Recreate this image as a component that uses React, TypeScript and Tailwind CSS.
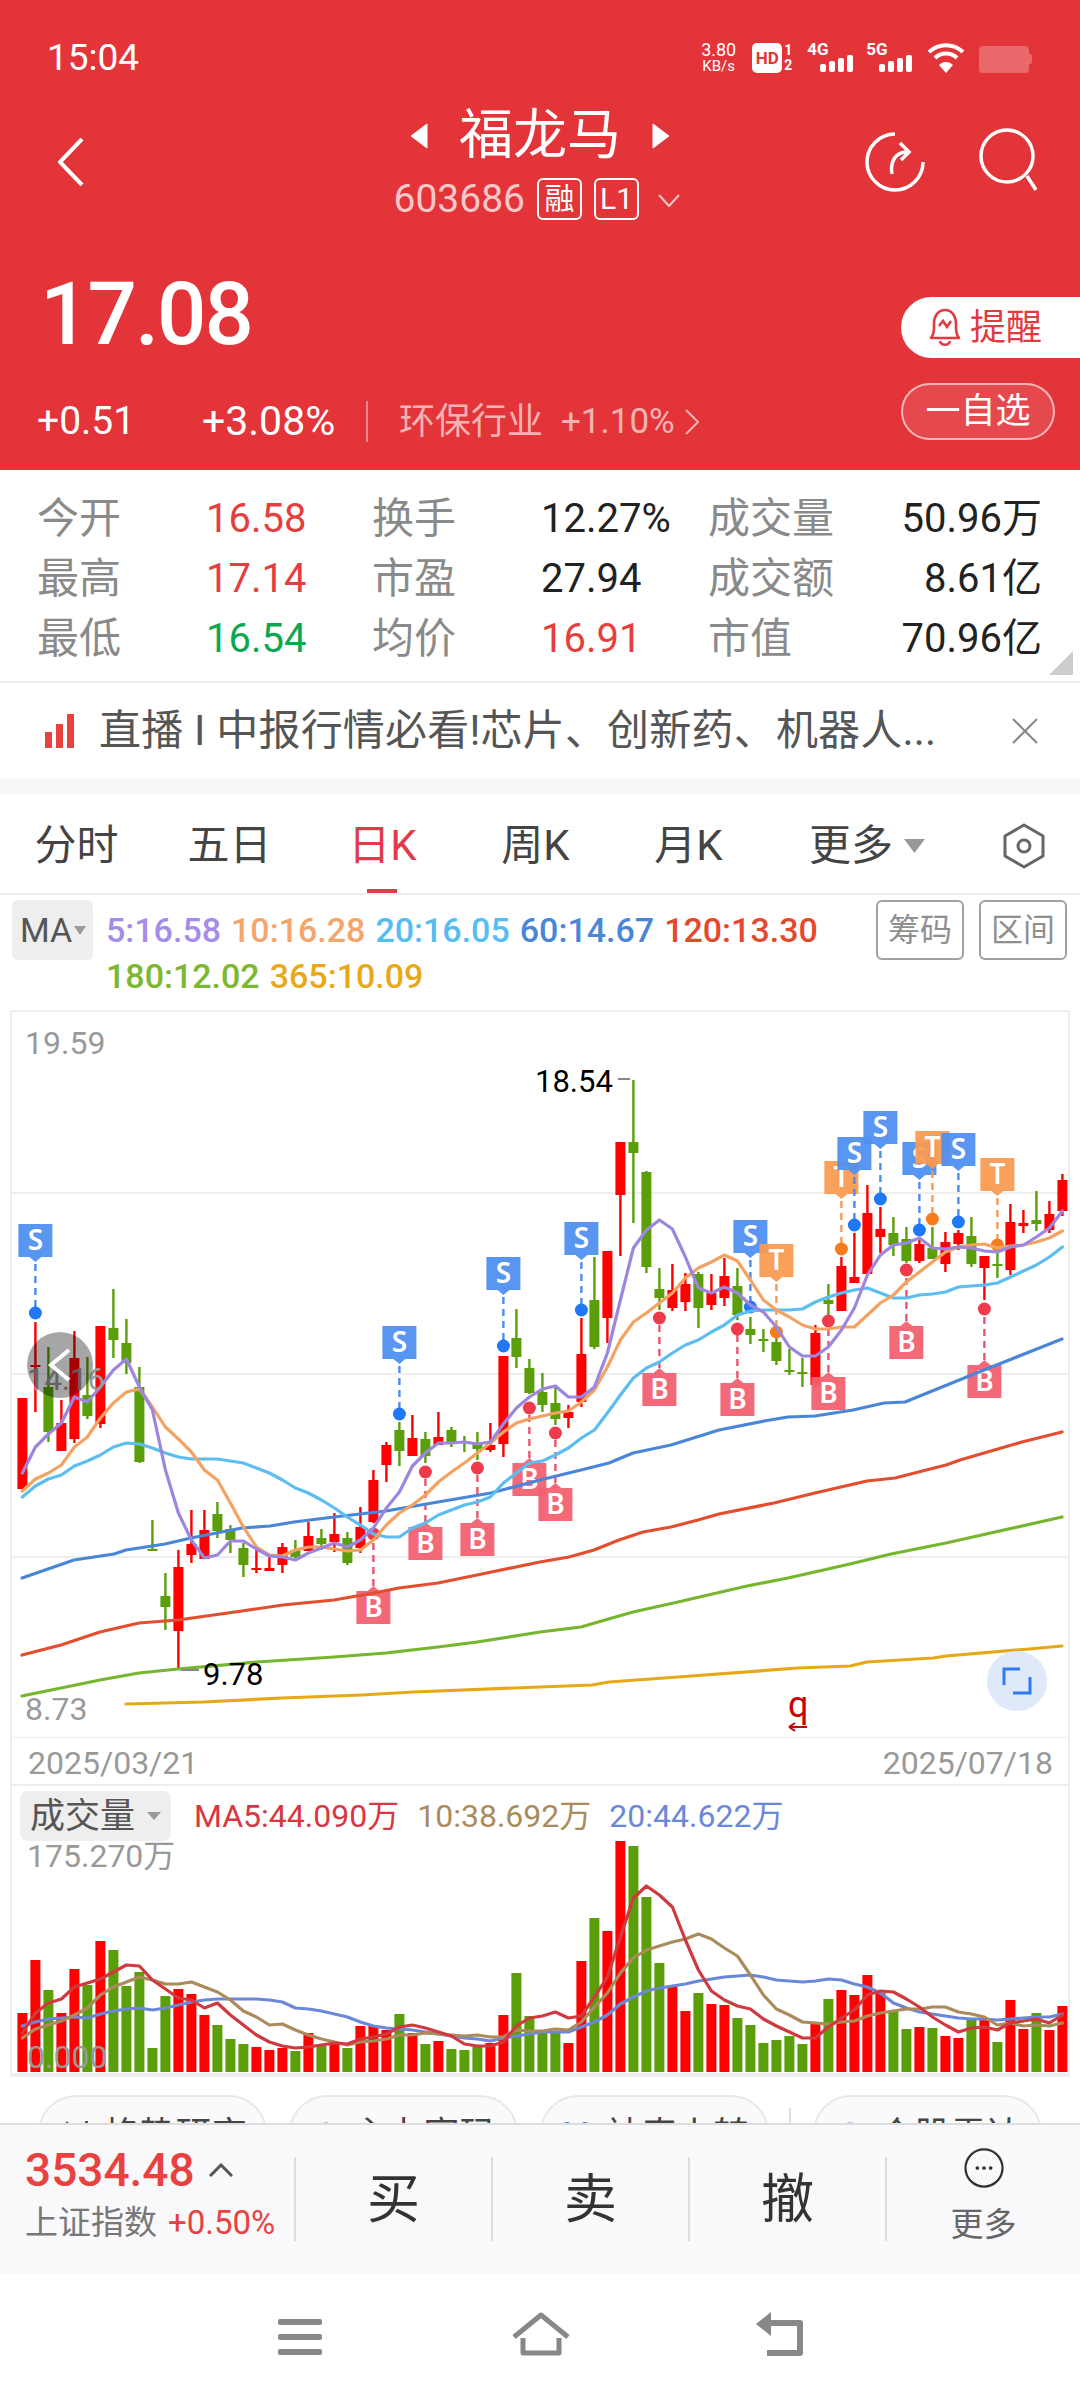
import React from 'react';

const RED = '#ff0000';
const GREEN = '#5a9e0a';

// [up, wickTop, bodyTop, bodyBottom, wickBottom]
const candles: [number, number, number, number, number][] = [
  [1, 1398, 1398, 1489, 1489], [1, 1322, 1365, 1366, 1412], [0, 1347, 1387, 1432, 1442], [1, 1400, 1423, 1451, 1451],
  [1, 1331, 1358, 1439, 1443], [0, 1357, 1395, 1416, 1419], [1, 1326, 1326, 1424, 1428], [0, 1289, 1328, 1340, 1358],
  [0, 1319, 1343, 1363, 1374], [0, 1367, 1387, 1462, 1463], [0, 1520, 1549, 1551, 1551], [0, 1573, 1596, 1607, 1630],
  [1, 1550, 1567, 1631, 1668], [1, 1510, 1544, 1555, 1563], [1, 1510, 1530, 1559, 1559], [0, 1502, 1514, 1531, 1538],
  [0, 1525, 1529, 1540, 1553], [0, 1543, 1548, 1565, 1577], [1, 1548, 1568, 1569, 1573], [1, 1557, 1568, 1571, 1571],
  [1, 1543, 1547, 1565, 1573], [0, 1540, 1550, 1557, 1558], [1, 1522, 1536, 1551, 1551], [0, 1529, 1538, 1544, 1550],
  [1, 1513, 1534, 1542, 1552], [0, 1532, 1538, 1563, 1565], [1, 1507, 1527, 1548, 1553], [1, 1470, 1480, 1522, 1523],
  [1, 1442, 1445, 1465, 1482], [0, 1422, 1430, 1451, 1466], [1, 1415, 1438, 1456, 1456], [0, 1432, 1439, 1456, 1463],
  [1, 1412, 1437, 1445, 1445], [0, 1427, 1430, 1442, 1447], [0, 1436, 1441, 1442, 1452], [0, 1432, 1443, 1449, 1460],
  [1, 1423, 1445, 1450, 1452], [1, 1356, 1356, 1444, 1457], [0, 1309, 1338, 1357, 1368], [0, 1359, 1368, 1393, 1394],
  [0, 1373, 1392, 1405, 1412], [0, 1387, 1403, 1419, 1425], [1, 1405, 1412, 1418, 1428], [1, 1318, 1354, 1402, 1407],
  [0, 1257, 1300, 1347, 1349], [1, 1251, 1251, 1318, 1343], [1, 1142, 1142, 1195, 1256], [0, 1080, 1142, 1153, 1223],
  [0, 1171, 1172, 1267, 1273], [0, 1268, 1289, 1298, 1310], [1, 1264, 1290, 1308, 1311], [1, 1273, 1284, 1302, 1311],
  [0, 1272, 1274, 1308, 1328], [1, 1274, 1293, 1305, 1310], [1, 1258, 1276, 1298, 1306], [0, 1268, 1286, 1315, 1320],
  [0, 1317, 1329, 1335, 1344], [0, 1329, 1339, 1341, 1352], [0, 1335, 1342, 1361, 1365], [0, 1349, 1370, 1372, 1375],
  [0, 1358, 1372, 1373, 1387], [1, 1325, 1333, 1385, 1387], [0, 1284, 1300, 1304, 1318], [1, 1257, 1266, 1311, 1311],
  [1, 1233, 1277, 1283, 1283], [1, 1185, 1213, 1274, 1274], [1, 1207, 1229, 1237, 1253], [0, 1217, 1233, 1245, 1256],
  [0, 1227, 1239, 1261, 1263], [1, 1240, 1244, 1261, 1263], [0, 1227, 1248, 1259, 1259], [1, 1232, 1242, 1264, 1272],
  [1, 1230, 1233, 1244, 1250], [0, 1217, 1236, 1264, 1267], [1, 1256, 1256, 1268, 1300], [0, 1252, 1264, 1265, 1278],
  [1, 1204, 1222, 1270, 1275], [1, 1210, 1223, 1226, 1233], [0, 1191, 1220, 1224, 1231], [1, 1201, 1214, 1230, 1233],
  [1, 1174, 1180, 1211, 1216],
];

const ma5 = [
  1473, 1447, 1434, 1423, 1397, 1402, 1387, 1370, 1359, 1387, 1410, 1470, 1513, 1540, 1558, 1555, 1541, 1541, 1549, 1556,
  1557, 1560, 1553, 1548, 1543, 1547, 1540, 1528, 1508, 1492, 1466, 1453, 1443, 1443, 1442, 1444, 1442, 1424, 1408, 1397,
  1389, 1386, 1397, 1397, 1387, 1353, 1300, 1248, 1230, 1220, 1229, 1257, 1288, 1293, 1287, 1293, 1305, 1312, 1327, 1347,
  1356, 1356, 1347, 1330, 1308, 1275, 1255, 1245, 1243, 1238, 1248, 1249, 1247, 1248, 1251, 1252, 1247, 1245, 1237, 1228, 1211,
];
const ma10 = [
  1491, 1479, 1473, 1465, 1447, 1437, 1418, 1403, 1392, 1389, 1407, 1427, 1439, 1452, 1470, 1480, 1503, 1527, 1547, 1555,
  1556, 1550, 1547, 1547, 1549, 1551, 1550, 1540, 1525, 1513, 1505, 1495, 1482, 1472, 1463, 1453, 1443, 1432, 1423, 1419,
  1416, 1413, 1411, 1402, 1390, 1367, 1340, 1322, 1313, 1303, 1293, 1278, 1268, 1262, 1255, 1261, 1280, 1300, 1310, 1317,
  1325, 1329, 1329, 1327, 1327, 1315, 1303, 1295, 1282, 1272, 1262, 1252, 1247, 1245, 1244, 1248, 1246, 1245, 1242, 1238, 1231,
];
const ma20 = [
  1497, 1486, 1479, 1475, 1466, 1461, 1455, 1447, 1443, 1444, 1448, 1453, 1457, 1459, 1459, 1459, 1461, 1463, 1468, 1473,
  1480, 1488, 1493, 1500, 1508, 1517, 1525, 1534, 1537, 1537, 1528, 1523, 1515, 1510, 1505, 1502, 1497, 1483, 1473, 1463,
  1461, 1455, 1448, 1438, 1430, 1413, 1395, 1378, 1368, 1362, 1353, 1345, 1340, 1332, 1325, 1315, 1311, 1310, 1310, 1310,
  1309, 1302, 1297, 1293, 1290, 1288, 1293, 1298, 1298, 1295, 1294, 1292, 1287, 1286, 1285, 1283, 1277, 1271, 1265, 1257, 1247,
];
const ma60 = '22,1578 74,1560 114,1554 126,1550 165,1544 191,1538 242,1528 270,1526 294,1522 334,1517 386,1511 438,1502 491,1493 540,1480 581,1470 609,1463 633,1453 671,1445 719,1430 764,1421 788,1417 815,1416 853,1410 884,1403 905,1402 984,1370 1062,1339';
const ma120 = '22,1655 61,1645 100,1632 139,1623 178,1620 242,1611 283,1605 334,1600 374,1593 399,1588 438,1583 477,1575 540,1562 569,1557 594,1550 619,1540 643,1532 671,1527 698,1520 719,1514 774,1503 815,1493 867,1481 895,1478 946,1465 960,1460 1022,1442 1062,1432';
const ma180 = '22,1696 61,1688 100,1680 139,1673 178,1669 257,1662 334,1657 386,1653 438,1647 477,1642 540,1632 581,1627 605,1620 633,1612 678,1602 747,1586 788,1578 850,1564 891,1554 946,1543 1062,1517';
const ma365 = '126,1704 203,1702 282,1698 362,1695 413,1692 540,1687 592,1685 609,1682 678,1677 798,1668 850,1666 867,1662 933,1658 946,1656 1029,1649 1062,1646';

const vols = [
  59, 112, 82, 59, 103, 87, 131, 122, 86, 100, 24, 76, 83, 78, 57, 47, 33, 28, 25, 22, 24, 21, 39, 26, 29, 24, 46, 46, 42, 58,
  39, 28, 31, 23, 22, 25, 29, 57, 99, 56, 39, 39, 29, 111, 154, 141, 231, 226, 175, 109, 86, 61, 79, 68, 67, 54, 47, 29, 32, 36,
  28, 49, 73, 82, 77, 97, 79, 62, 43, 45, 44, 36, 34, 54, 52, 30, 72, 43, 59, 42, 66,
];
const volMa5 = [
  2033, 2013, 2003, 1999, 1987, 1983, 1979, 1972, 1965, 1966, 1980, 1989, 1998, 2000, 2008, 2003, 2015, 2025, 2035, 2042,
  2046, 2048, 2047, 2045, 2043, 2044, 2039, 2037, 2034, 2027, 2025, 2028, 2032, 2036, 2044, 2046, 2046, 2042, 2026, 2018,
  2016, 2012, 2018, 2016, 1997, 1977, 1937, 1898, 1886, 1895, 1907, 1940, 1970, 1991, 2000, 2006, 2009, 2019, 2026, 2032,
  2038, 2038, 2027, 2018, 2010, 1995, 1991, 1992, 1999, 2007, 2017, 2025, 2032, 2028, 2027, 2030, 2023, 2021, 2019, 2023, 2015,
];
const volMa10 = [
  2038, 2029, 2025, 2021, 2015, 2008, 1995, 1987, 1982, 1977, 1980, 1984, 1984, 1982, 1987, 1992, 2000, 2011, 2017, 2025,
  2024, 2030, 2035, 2039, 2042, 2045, 2042, 2041, 2039, 2035, 2035, 2033, 2034, 2035, 2036, 2035, 2037, 2037, 2030, 2031,
  2031, 2029, 2030, 2022, 2007, 1993, 1973, 1958, 1950, 1946, 1942, 1939, 1934, 1939, 1948, 1956, 1975, 1995, 2009, 2015,
  2022, 2023, 2024, 2022, 2021, 2016, 2013, 2011, 2009, 2009, 2007, 2007, 2012, 2014, 2017, 2025, 2023, 2026, 2025, 2026, 2023,
];
const volMa20 = [
  2026, 2022, 2019, 2018, 2017, 2018, 2014, 2011, 2009, 2008, 2010, 2008, 2005, 2002, 2000, 1999, 1999, 1999, 1999, 2000,
  2002, 2008, 2009, 2011, 2014, 2017, 2022, 2026, 2028, 2029, 2030, 2032, 2034, 2036, 2038, 2039, 2041, 2038, 2036, 2034,
  2032, 2032, 2032, 2027, 2022, 2015, 2004, 1997, 1991, 1988, 1986, 1984, 1981, 1979, 1977, 1976, 1975, 1977, 1980, 1981,
  1982, 1981, 1979, 1980, 1984, 1987, 1993, 2003, 2008, 2012, 2014, 2016, 2018, 2019, 2019, 2020, 2019, 2018, 2017, 2017, 2014,
];

// kind, candle index, flag top, dot y
const markers: ['S' | 'T' | 'B', number, number, number][] = [
  ['S', 1, 1224, 1313], ['S', 29, 1326, 1414], ['B', 27, 1591, 1534], ['B', 31, 1527, 1472], ['B', 35, 1523, 1468],
  ['S', 37, 1257, 1346], ['B', 39, 1463, 1408], ['B', 41, 1488, 1433], ['S', 43, 1222, 1310], ['B', 49, 1373, 1318],
  ['B', 55, 1383, 1329], ['S', 56, 1220, 1307], ['T', 58, 1244, 1332], ['B', 62, 1377, 1321], ['T', 63, 1161, 1249],
  ['S', 64, 1137, 1225], ['S', 66, 1111, 1199], ['B', 68, 1326, 1270], ['S', 69, 1142, 1230], ['T', 70, 1131, 1219],
  ['S', 72, 1133, 1222], ['B', 74, 1365, 1309], ['T', 75, 1158, 1245],
];

const markerColors = {
  S: { flag: '#4f8ff0', dot: '#1f78f5', dash: '#4a8cf0' },
  T: { flag: '#f99a50', dot: '#f57d1e', dash: '#f59a55' },
  B: { flag: '#f2606f', dot: '#ee3a4a', dash: '#e8556a' },
};

const xOf = (i: number) => 22.4 + 13 * i;
const pts = (ys: number[]) => ys.map((y, i) => `${xOf(i)},${y}`).join(' ');

function Line({ points, color }: { points: string; color: string }) {
  return <polyline points={points} fill="none" stroke={color} strokeWidth={3.2} strokeLinejoin="round" strokeLinecap="round" />;
}

function Marker({ kind, i, top, dot }: { kind: 'S' | 'T' | 'B'; i: number; top: number; dot: number }) {
  const c = markerColors[kind];
  const x = xOf(i);
  const up = kind === 'B';
  const d = up
    ? `M${x - 17} ${top}H${x - 6}L${x} ${top - 5}L${x + 6} ${top}H${x + 17}V${top + 33}H${x - 17}Z`
    : `M${x - 17} ${top}H${x + 17}V${top + 33}H${x + 6}L${x} ${top + 38}L${x - 6} ${top + 33}H${x - 17}Z`;
  return (
    <g>
      <line x1={x} x2={x} y1={up ? top - 5 : top + 40} y2={dot} stroke={c.dash} strokeWidth={2.4} strokeDasharray="7 5" />
      <circle cx={x} cy={dot} r={6.5} fill={c.dot} />
      <path d={d} fill={c.flag} fillOpacity={0.94} />
      <text x={x} y={top + 26} textAnchor="middle" fontSize={28} fontWeight={600} fill="#fff" fontFamily="Noto Sans, sans-serif">
        {kind}
      </text>
    </g>
  );
}

function Candles() {
  return (
    <>
      {candles.map(([up, wt, bt, bb, wb], i) => {
        const color = up ? RED : GREEN;
        return (
          <g key={i}>
            <rect x={xOf(i) - 1.2} y={wt} width={2.4} height={wb - wt} fill={color} />
            <rect x={xOf(i) - 5} y={bt} width={10} height={Math.max(bb - bt, 2)} fill={color} />
          </g>
        );
      })}
    </>
  );
}

function KChart() {
  return (
    <div className="relative w-[1060px] h-[728px] ml-[10px] border-x-2 border-t-2 border-[#eeeeee] box-border">
      <svg className="absolute left-[-2px] top-[-2px]" width={1060} height={728} viewBox="10 1010 1060 728">
        {[1193, 1374, 1557, 1738].map((y) => (
          <line key={y} x1={10} x2={1070} y1={y} y2={y} stroke="#eeeeee" strokeWidth={2} />
        ))}
        <Candles />
        {markers.map(([kind, i, top, dot]) => (
          <Marker key={`${kind}${i}`} kind={kind} i={i} top={top} dot={dot} />
        ))}
        <Line points={ma365} color="#e6a817" />
        <Line points={ma180} color="#76b52e" />
        <Line points={ma120} color="#e24e2e" />
        <Line points={ma60} color="#4a86d8" />
        <Line points={pts(ma20)} color="#5bbdf0" />
        <Line points={pts(ma10)} color="#f4a261" />
        <Line points={pts(ma5)} color="#9c86e0" />
        <line x1={618} x2={630} y1={1079} y2={1079} stroke="#888" strokeWidth={2} />
        <line x1={181} x2={199} y1={1670} y2={1670} stroke="#888" strokeWidth={2} />
        <path d="M789 1727H807M789 1727l6-4M789 1727l6 4" stroke="#cc0000" strokeWidth={2} fill="none" />
        <circle cx={1017} cy={1681} r={30} fill="#dfe9fa" />
        <path d="M1004 1685V1669H1020M1030 1677V1693H1013" fill="none" stroke="#2f7bf0" strokeWidth={3} />
      </svg>
      <span className="absolute left-[13px] top-[13px] text-[32px] leading-[36px] text-[#999999]">19.59</span>
      <span className="absolute left-[15px] top-[350px] text-[31px] leading-[36px] text-[#999999]">14.16</span>
      <span className="absolute left-[13px] top-[679px] text-[32px] leading-[36px] text-[#999999]">8.73</span>
      <span className="absolute left-[523px] top-[52px] text-[31px] leading-[36px] text-black">18.54</span>
      <span className="absolute left-[191px] top-[645px] text-[31px] leading-[36px] text-black">9.78</span>
      <span className="absolute left-[776px] top-[675px] text-[36px] leading-[36px] text-[#cc0000]">q</span>
      <div className="absolute left-[15px] top-[320px] w-[66px] h-[66px] rounded-full bg-black/35 flex items-center justify-center">
        <svg width="28" height="36" viewBox="0 0 28 36" fill="none">
          <path d="M23 3L5 18L23 33" stroke="#ffffff" strokeWidth={4} />
        </svg>
      </div>
    </div>
  );
}

function VolumeChart() {
  return (
    <div className="relative w-[1060px] h-[291px] ml-[10px] border-x-2 border-[#eeeeee] box-border">
      <svg className="absolute left-[-2px] top-0" width={1060} height={291} viewBox="10 1786 1060 291">
        <rect x={10} y={2073} width={1060} height={4} fill="#eeeeee" />
        {vols.map((h, i) => (
          <rect key={i} x={xOf(i) - 5} y={2072 - h} width={10} height={h} fill={candles[i][0] ? RED : GREEN} />
        ))}
        <Line points={pts(volMa20)} color="#6b88d8" />
        <Line points={pts(volMa10)} color="#ab8a5c" />
        <Line points={pts(volMa5)} color="#d0393f" />
      </svg>
      <div className="absolute left-[8px] top-[5px] flex items-center gap-[6px]">
        <div className="w-[151px] h-[50px] rounded-[8px] bg-[#eeeeee] flex items-center pl-[10px] gap-[12px]">
          <span className="text-[35px] leading-none text-[#555555]">成交量</span>
          <svg width="14" height="8" viewBox="0 0 14 8">
            <path d="M0 0H14L7 8Z" fill="#999999" />
          </svg>
        </div>
        <div className="flex gap-[18px] text-[32px] leading-none ml-[17px]">
          <span className="text-[#d8373f]">MA5:44.090万</span>
          <span className="text-[#ab8a5c]">10:38.692万</span>
          <span className="text-[#6b88d8]">20:44.622万</span>
        </div>
      </div>
      <span className="absolute left-[15px] top-[52px] text-[32px] leading-[36px] text-[#999999]">175.270万</span>
      <span className="absolute left-[15px] top-[253px] text-[32px] leading-[36px] text-[#999999]">0.000</span>
    </div>
  );
}

function StatusBar() {
  const Bars = () => (
    <div className="flex items-end gap-[3px] h-[17px]">
      {[8, 11, 14, 17].map((h) => (
        <div key={h} className="w-[6px] rounded-[2px] bg-white" style={{ height: h }} />
      ))}
    </div>
  );
  return (
    <div className="flex items-start h-[120px] pl-[47px] pt-[37px]">
      <span className="text-[37px] leading-[42px] text-white">15:04</span>
      <div className="flex flex-col items-center ml-[562px] pt-[4px] text-white">
        <span className="text-[18px] leading-[18px]">3.80</span>
        <span className="text-[15px] leading-[15px]">KB/s</span>
      </div>
      <div className="flex items-start ml-[16px] pt-[6px]">
        <div className="w-[30px] h-[30px] rounded-[5px] bg-white flex items-center justify-center text-[#e33539] text-[17px] font-bold leading-none">
          HD
        </div>
        <div className="flex flex-col ml-[2px] text-white text-[14px] leading-[15px] font-bold">
          <span>1</span>
          <span>2</span>
        </div>
      </div>
      <div className="ml-[15px] pt-[4px] flex flex-col text-white">
        <span className="text-[17px] leading-[17px] font-bold">4G</span>
        <div className="ml-[13px] -mt-[3px]"><Bars /></div>
      </div>
      <div className="ml-[13px] pt-[4px] flex flex-col text-white">
        <span className="text-[17px] leading-[17px] font-bold">5G</span>
        <div className="ml-[13px] -mt-[3px]"><Bars /></div>
      </div>
      <svg className="ml-[15px] mt-[6px]" width="38" height="30" viewBox="0 0 38 30" fill="none" stroke="#ffffff" strokeWidth={4}>
        <path d="M2 9C12 0 26 0 36 9" />
        <path d="M8 15C14 9 24 9 30 15" />
        <path d="M19 30L12 22C16 18 22 18 26 22Z" fill="#ffffff" stroke="none" />
      </svg>
      <div className="ml-[14px] mt-[9px] w-[50px] h-[27px] rounded-[4px] bg-white/25" />
      <div className="mt-[17px] w-[3px] h-[10px] rounded-r-[2px] bg-white/25" />
    </div>
  );
}

function Header() {
  return (
    <div className="h-[470px] bg-[#e33539] text-white">
      <StatusBar />
      <div className="flex items-start h-[100px] pl-[58px]">
        <svg className="mt-[18px]" width="26" height="48" viewBox="0 0 26 48" fill="none">
          <path d="M24 1L2 24L24 47" stroke="#ffffff" strokeWidth={4} />
        </svg>
        <div className="flex flex-col items-center ml-[306px] w-[300px] -mt-[13px]">
          <div className="flex items-center h-[58px] w-[260px] justify-between">
            <svg width="18" height="26" viewBox="0 0 18 26">
              <path d="M17 1V25L1 13Z" fill="#ffffff" stroke="#ffffff" strokeLinejoin="round" />
            </svg>
            <span className="text-[54px] leading-none">福龙马</span>
            <svg width="18" height="26" viewBox="0 0 18 26">
              <path d="M1 1V25L17 13Z" fill="#ffffff" stroke="#ffffff" strokeLinejoin="round" />
            </svg>
          </div>
          <div className="flex items-center w-[320px] mt-[13px] ml-[27px]">
            <span className="text-[39px] leading-none text-[#f7c8c8]">603686</span>
            <span className="ml-[12px] w-[45px] h-[42px] border-2 border-white rounded-[6px] flex items-center justify-center text-[30px] leading-none">融</span>
            <span className="ml-[12px] w-[45px] h-[42px] border-2 border-white rounded-[6px] flex items-center justify-center text-[30px] leading-none">L1</span>
            <svg className="ml-[19px] mt-[2px]" width="22" height="13" viewBox="0 0 22 13" fill="none">
              <path d="M1 1L11 12L21 1" stroke="#f7c8c8" strokeWidth={2} />
            </svg>
          </div>
        </div>
        <svg className="ml-[175px] mt-[12px]" width="60" height="60" viewBox="0 0 60 60" fill="none" stroke="#ffffff" strokeWidth={3.5}>
          <path d="M30 2A28 28 0 1 0 58 30" />
          <path d="M27 42C25 30 30 20 42 20M35 11L44 20L36 28" />
        </svg>
        <svg className="ml-[54px] mt-[8px]" width="60" height="64" viewBox="0 0 60 64" fill="none" stroke="#ffffff" strokeWidth={3.5}>
          <circle cx="28" cy="28" r="26" />
          <path d="M48 48L57 62" />
        </svg>
      </div>
      <div className="flex justify-between mt-[7px]">
        <span className="ml-[40px] mt-[44px] text-[87px] leading-none font-medium tracking-[-2px]">17.08</span>
        <div className="flex h-[61px] w-[179px] rounded-l-full bg-white items-center pl-[27px] gap-[8px] mt-[70px]">
          <svg width="34" height="42" viewBox="0 0 34 42" fill="none" stroke="#e33a3f" strokeWidth={2.6}>
            <path d="M3 31C6 27 6 24 6 17C6 8 11 3 17 3S28 8 28 17C28 24 28 27 31 31Z" strokeLinejoin="round" />
            <path d="M12 34C13 39 21 39 22 34" />
            <path d="M11 19L15 14L19 20L23 14" />
          </svg>
          <span className="text-[36px] leading-none text-[#e33a3f]">提醒</span>
        </div>
      </div>
      <div className="flex items-start mt-[25px]">
        <div className="flex items-center ml-[37px] mt-[18px] h-[41px]">
          <span className="text-[39px] leading-none w-[165px]">+0.51</span>
          <span className="text-[41px] leading-none w-[164px]">+3.08%</span>
          <div className="w-[2px] h-[41px] bg-white/40" />
          <span className="ml-[31px] text-[36px] leading-none text-[#f4b3b3]">环保行业</span>
          <span className="ml-[18px] text-[35px] leading-none text-[#f4b3b3]">+1.10%</span>
          <svg className="ml-[10px]" width="14" height="26" viewBox="0 0 14 26" fill="none">
            <path d="M1 1L13 13L1 25" stroke="#f4b3b3" strokeWidth={2} />
          </svg>
        </div>
        <div className="ml-auto mr-[25px] w-[154px] h-[57px] rounded-full border-2 border-white/60 bg-white/10 flex items-center justify-center text-[35px] leading-none">
          一自选
        </div>
      </div>
    </div>
  );
}

const stats = [
  ['今开', '16.58', 'text-[#e53e3e]', '换手', '12.27%', 'text-[#222222]', '成交量', '50.96万'],
  ['最高', '17.14', 'text-[#e53e3e]', '市盈', '27.94', 'text-[#222222]', '成交额', '8.61亿'],
  ['最低', '16.54', 'text-[#0fa650]', '均价', '16.91', 'text-[#e53e3e]', '市值', '70.96亿'],
];

function StatsTable() {
  return (
    <div className="relative h-[213px] border-b-2 border-[#eeeeee] pt-[19px] pl-[37px]">
      <div className="grid grid-cols-[169px_166px_169px_167px_150px_184px] auto-rows-[60px] items-center text-[40px] leading-none">
        {stats.map((r) => (
          <React.Fragment key={r[0]}>
            <span className="text-[42px] text-[#8a8a8a]">{r[0]}</span>
            <span className={r[2]}>{r[1]}</span>
            <span className="text-[42px] text-[#8a8a8a]">{r[3]}</span>
            <span className={r[5]}>{r[4]}</span>
            <span className="text-[42px] text-[#8a8a8a]">{r[6]}</span>
            <span className="text-right text-[#222222]">{r[7]}</span>
          </React.Fragment>
        ))}
      </div>
      <svg className="absolute right-[7px] bottom-[6px]" width="24" height="24" viewBox="0 0 24 24">
        <path d="M24 0V24H0Z" fill="#cccccc" />
      </svg>
    </div>
  );
}

function AdRow() {
  return (
    <div className="flex items-center h-[96px] pl-[45px]">
      <div className="flex items-end gap-[4px] h-[34px]">
        <div className="w-[7px] h-[16px] bg-[#e8413f]" />
        <div className="w-[7px] h-[24px] bg-[#e8413f]" />
        <div className="w-[7px] h-[34px] bg-[#e8413f]" />
      </div>
      <span className="ml-[25px] text-[42px] tracking-[0.2px] leading-none text-[#555555] whitespace-nowrap">直播 I 中报行情必看!芯片、创新药、机器人...</span>
      <svg className="ml-auto mr-[42px]" width="26" height="26" viewBox="0 0 26 26" fill="none">
        <path d="M1 1L25 25M25 1L1 25" stroke="#888888" strokeWidth={2} />
      </svg>
    </div>
  );
}

function Tabs() {
  const tabs = ['分时', '五日', '日K', '周K', '月K'];
  return (
    <div className="flex items-center h-[101px] border-b-2 border-[#eeeeee] pt-[5px]">
      {tabs.map((t, i) => (
        <div key={t} className={`relative w-[153px] h-full flex items-center justify-center text-[42px] leading-none ${i === 2 ? 'text-[#e33a4a]' : 'text-[#444444]'}`}>
          {t}
          {i === 2 && <div className="absolute bottom-0 left-[61px] w-[30px] h-[4px] bg-[#e33a4a]" />}
        </div>
      ))}
      <span className="ml-[44px] text-[42px] leading-none text-[#444444]">更多</span>
      <svg className="ml-[11px]" width="21" height="14" viewBox="0 0 21 14">
        <path d="M0 0H21L10.5 14Z" fill="#999999" />
      </svg>
      <svg className="ml-[78px]" width="42" height="46" viewBox="0 0 42 46" fill="none" stroke="#666666" strokeWidth={3}>
        <path d="M21 2L40 13V33L21 44L2 33V13Z" strokeLinejoin="round" />
        <circle cx="21" cy="23" r="6" />
      </svg>
    </div>
  );
}

function MaRow() {
  return (
    <div className="flex h-[115px] pt-[5px] pl-[12px]">
      <div className="w-[81px] h-[60px] rounded-[6px] bg-[#eeeeee] flex items-center pl-[8px] gap-[2px]">
        <span className="text-[34px] leading-none text-[#555555]">MA</span>
        <svg width="12" height="9" viewBox="0 0 12 9">
          <path d="M0 0H12L6 9Z" fill="#999999" />
        </svg>
      </div>
      <div className="ml-[13px] w-[720px] flex flex-wrap content-start gap-x-[10px] gap-y-[6px] pt-[10px] text-[34px] leading-[40px] font-medium">
        <span className="text-[#a48ce8]">5:16.58</span>
        <span className="text-[#f4a56a]">10:16.28</span>
        <span className="text-[#55bdf0]">20:16.05</span>
        <span className="text-[#4a86d8]">60:14.67</span>
        <span className="text-[#e5492d]">120:13.30</span>
        <span className="text-[#7cb82f]">180:12.02</span>
        <span className="text-[#e8a81a]">365:10.09</span>
      </div>
      <div className="ml-auto mr-[13px] flex gap-[15px]">
        {['筹码', '区间'].map((t) => (
          <div key={t} className="w-[88px] h-[60px] border-2 border-[#a0a0a0] rounded-[6px] flex items-center justify-center text-[32px] leading-none text-[#8f8f8f]">
            {t}
          </div>
        ))}
      </div>
    </div>
  );
}

function ChipIcon({ n }: { n: number }) {
  if (n === 0) {
    return (
      <svg width="36" height="30" viewBox="0 0 36 30" fill="#555555">
        <path d="M10 0L22 14H0Z" />
        <rect x="28" y="0" width="3" height="30" />
      </svg>
    );
  }
  if (n === 1) {
    return (
      <svg width="30" height="30" viewBox="0 0 30 30" fill="none" stroke="#666666" strokeWidth={3}>
        <circle cx="15" cy="13" r="10" />
      </svg>
    );
  }
  if (n === 2) {
    return (
      <svg width="36" height="30" viewBox="0 0 36 30" fill="#2f7bf0">
        <circle cx="8" cy="5" r="4" />
        <circle cx="26" cy="5" r="4" />
      </svg>
    );
  }
  return (
    <svg width="36" height="30" viewBox="0 0 36 30" fill="none" stroke="#2f7bf0" strokeWidth={3}>
      <circle cx="18" cy="18" r="15" />
      <path d="M18 3V18" />
    </svg>
  );
}

function Chips() {
  const chips = ['格势研究', '主力密码', '神奇上转', '个股雷达'];
  return (
    <div className="h-[46px] overflow-hidden flex items-start pt-[18px] pl-[38px] gap-[22px]">
      {chips.map((t, i) => (
        <React.Fragment key={t}>
          {i === 3 && <div className="mt-[13px] -ml-[2px] w-[2px] h-[30px] bg-[#dddddd] shrink-0" />}
          <div className="w-[229px] h-[82px] rounded-[38px] border-2 border-[#e8e8e8] bg-[#fafafa] flex items-center justify-center gap-[10px] shrink-0">
            <ChipIcon n={i} />
            <span className="text-[36px] leading-none text-[#444444]">{t}</span>
          </div>
        </React.Fragment>
      ))}
    </div>
  );
}

function TradeBar() {
  const actions = ['买', '卖', '撤'];
  return (
    <div className="h-[150px] bg-[#f9f9fb] border-t-2 border-[#dddddd] flex items-center">
      <div className="w-[294px] pl-[25px] pb-[15px]">
        <div className="flex items-center h-[52px]">
          <span className="text-[46px] leading-none font-medium text-[#e8413f]">3534.48</span>
          <svg className="ml-[14px]" width="24" height="14" viewBox="0 0 24 14" fill="none">
            <path d="M1 13L12 2L23 13" stroke="#555555" strokeWidth={3} />
          </svg>
        </div>
        <div className="flex items-center mt-[10px]">
          <span className="text-[33px] leading-none text-[#777777]">上证指数</span>
          <span className="ml-[11px] text-[33px] leading-none text-[#e8413f]">+0.50%</span>
        </div>
      </div>
      {actions.map((a) => (
        <div key={a} className="w-[197px] h-[84px] pt-[3px] border-l-2 border-[#dddddd] flex items-center justify-center text-[53px] leading-none text-[#333333]">
          {a}
        </div>
      ))}
      <div className="w-[195px] h-[84px] border-l-2 border-[#dddddd] flex flex-col items-center mr-[-2px]">
        <svg className="mt-[-9px]" width="54" height="54" viewBox="0 0 54 54" fill="none">
          <circle cx="27" cy="27" r="25" stroke="#333333" strokeWidth={3} />
          <circle cx="18" cy="27" r="2.5" fill="#333333" />
          <circle cx="27" cy="27" r="2.5" fill="#333333" />
          <circle cx="36" cy="27" r="2.5" fill="#333333" />
        </svg>
        <span className="mt-[20px] text-[33px] leading-none text-[#666666]">更多</span>
      </div>
    </div>
  );
}

function NavBar() {
  return (
    <div className="h-[127px] bg-white flex items-start pt-[39px] pl-[278px]">
      <div className="mt-[7px] flex flex-col gap-[9px]">
        <div className="w-[44px] h-[6px] rounded-[2px] bg-[#888888]" />
        <div className="w-[44px] h-[6px] rounded-[2px] bg-[#888888]" />
        <div className="w-[44px] h-[6px] rounded-[2px] bg-[#888888]" />
      </div>
      <svg className="ml-[190px]" width="58" height="44" viewBox="0 0 58 44" fill="none" stroke="#888888" strokeWidth={5}>
        <path d="M2 25L29 3L56 25" strokeLinejoin="round" />
        <path d="M11 26V41H47V26" strokeLinejoin="round" />
      </svg>
      <svg className="ml-[186px]" width="50" height="44" viewBox="0 0 50 44">
        <path d="M0 12L15 0V24Z" fill="#888888" />
        <path d="M12 11H44V41H11" fill="none" stroke="#888888" strokeWidth={6} strokeLinejoin="round" />
      </svg>
    </div>
  );
}

export default function App() {
  return (
    <div className="w-[1080px] h-[2400px] overflow-hidden bg-white font-['Roboto','Noto_Sans_CJK_SC',sans-serif]">
      <Header />
      <StatsTable />
      <AdRow />
      <div className="h-[15px] bg-[#f7f7f7]" />
      <Tabs />
      <MaRow />
      <KChart />
      <div className="flex justify-between items-center w-[1060px] h-[48px] ml-[10px] pl-[16px] pr-[15px] pt-[3px] border-x-2 border-b-2 border-[#eeeeee] box-border text-[32px] leading-none text-[#999999]">
        <span>2025/03/21</span>
        <span>2025/07/18</span>
      </div>
      <VolumeChart />
      <Chips />
      <TradeBar />
      <NavBar />
    </div>
  );
}
